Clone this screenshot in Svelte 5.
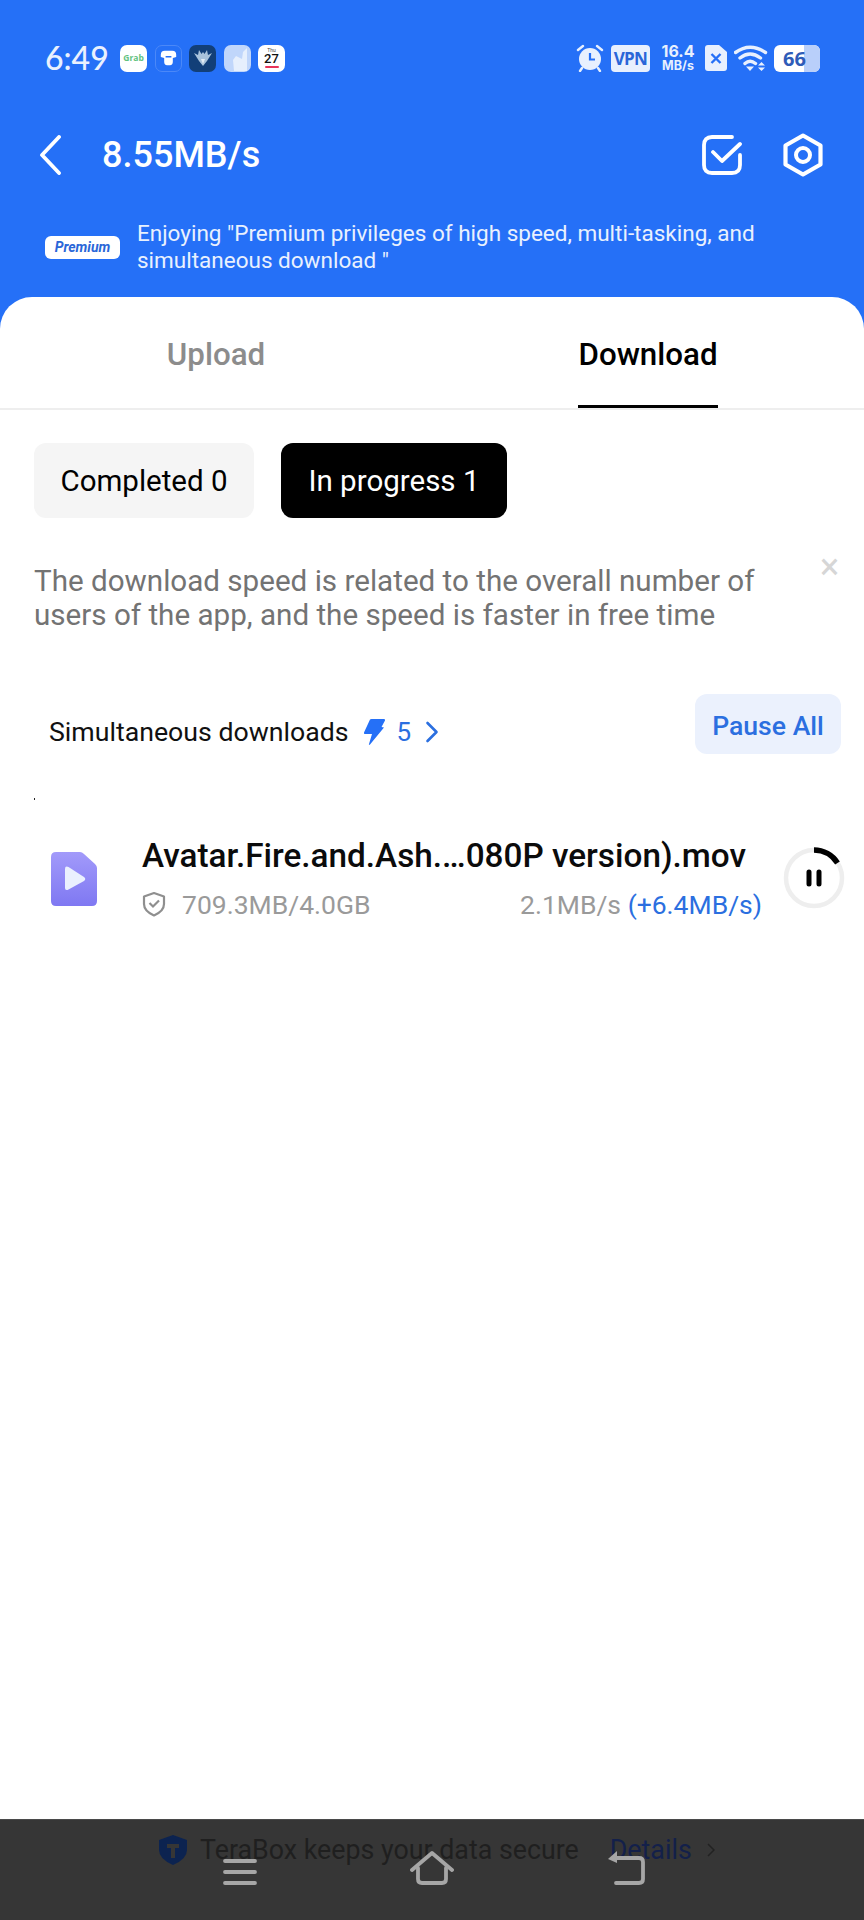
<script>
  const stats = { speed: '8.55MB/s', done: 0, active: 1, slots: 5 };
</script>

<div class="page">
  <header class="top">
    <div class="status">
      <span class="time">6:49</span>
      <div class="apps">
        <span class="tile white grab">Grab</span>
        <span class="tile outline">
          <svg viewBox="0 0 26 26" width="26" height="26"><path d="M5 9.500Q5 5.500 9 5.500H17Q21 5.500 21 9.500V12L17.500 13V17Q17.500 20.500 14.500 20.500H11.500Q8.500 20.500 8.500 17V13L5 12Z" fill="#fff"/><path d="M10 11H16V12.500H10Z" fill="#2570f7"/></svg>
        </span>
        <span class="tile navy">
          <svg viewBox="0 0 26 26" width="26" height="26"><path d="M13 21L9 16L4 8L8 10L9 5L11.500 9L13 7L14.500 9L17 5L18 10L22 8L17 16Z" fill="#a9c3dc"/><path d="M13 19L11 14H15Z" fill="#e4edf5"/></svg>
        </span>
        <span class="tile pale">
          <svg viewBox="0 0 26 26" width="26" height="26"><path d="M10 26L9 15L12 11L18 14L19 7L23 3V26Z" fill="#e6effd"/></svg>
        </span>
        <span class="tile white cal"><small>Thu</small><b>27</b><i></i></span>
      </div>
      <div class="sys">
        <svg class="alarm" viewBox="0 0 28 28" width="28" height="28"><circle cx="14" cy="15" r="11" fill="#e8f0fe"/><path d="M14 9V15.500H19" fill="none" stroke="#2570f7" stroke-width="2.200"/><path d="M2 6L7 2M26 6L21 2M6 24L4 27M22 24L24 27" stroke="#e8f0fe" stroke-width="2.400" stroke-linecap="round"/></svg>
        <span class="vpn">VPN</span>
        <span class="net"><b>16.4</b><b class="unit">MB/s</b></span>
        <svg class="sim" viewBox="0 0 22 26" width="22" height="26"><path d="M3 0H14L22 7V23Q22 26 19 26H3Q0 26 0 23V3Q0 0 3 0Z" fill="#e8f0fe"/><path d="M6.500 9L15.500 18M15.500 9L6.500 18" stroke="#2570f7" stroke-width="2.400"/></svg>
        <svg class="wifi" viewBox="0 0 34 28" width="34" height="28"><path d="M1.500 8.500Q16 -2 31.500 8.500M6 14Q16 6 26.500 14M11 19.500Q16 15 21.500 19.500" fill="none" stroke="#e8f0fe" stroke-width="3.400" stroke-linecap="round"/><path d="M12 22.500H20L16 27Z" fill="#e8f0fe"/><path d="M24 21.500L27.500 18L31 21.500ZM24 23.500H31L27.500 27Z" fill="#e8f0fe"/></svg>
        <span class="battery"><b>66</b><i></i></span>
      </div>
    </div>

    <div class="bar">
      <svg class="back" viewBox="0 0 24 40" width="24" height="40"><path d="M21 2L4 20L21 38" fill="none" stroke="#fff" stroke-width="3.800" stroke-linecap="round" stroke-linejoin="round"/></svg>
      <h1>{stats.speed}</h1>
      <svg class="check" viewBox="0 0 40 40" width="40" height="40"><path d="M38 20V30Q38 38 30 38H10Q2 38 2 30V10Q2 2 10 2H30" fill="none" stroke="#fff" stroke-width="3.800" stroke-linecap="round"/><path d="M11 17L20 26L38 9" fill="none" stroke="#fff" stroke-width="3.800" stroke-linecap="round" stroke-linejoin="round"/></svg>
      <svg class="gear" viewBox="0 0 42 44" width="42" height="44"><path d="M21 2.500L38.500 12.500V31.500L21 41.500L3.500 31.500V12.500Z" fill="none" stroke="#fff" stroke-width="4.200" stroke-linejoin="round"/><circle cx="21" cy="22" r="7" fill="none" stroke="#fff" stroke-width="4"/></svg>
    </div>

    <div class="promo">
      <span class="badge">Premium</span>
      <p>Enjoying "Premium privileges of high speed, multi-tasking, and simultaneous download "</p>
    </div>
  </header>

  <main class="sheet">
    <nav class="tabs">
      <button class="tab">Upload</button>
      <button class="tab on">Download</button>
    </nav>

    <div class="chips">
      <span class="chip">Completed {stats.done}</span>
      <span class="chip dark">In progress {stats.active}</span>
    </div>

    <div class="notice">
      <p>The download speed is related to the overall number of users of the app, and the speed is faster in free time</p>
      <span class="close">×</span>
    </div>

    <div class="sim-row">
      <span class="label">Simultaneous downloads</span>
      <svg class="bolt" viewBox="0 0 24 28" width="24" height="28"><path d="M8 1.500Q8.500 1 9.500 1H22Q23.500 1 23 2.500L19.500 9L22 9.500L8 26.500Q6.500 27.500 7 26L10 16H3Q1.500 16 2 14.500Z" fill="#2570f7"/></svg>
      <span class="num">{stats.slots}</span>
      <svg class="more" viewBox="0 0 14 22" width="14" height="22"><path d="M2.500 2L11.500 11L2.500 20" fill="none" stroke="#2b6fe0" stroke-width="2.600" stroke-linecap="round" stroke-linejoin="round"/></svg>
      <button class="pause-all">Pause All</button>
    </div>

    <div class="dot"></div>

    <div class="item">
      <svg class="file" viewBox="0 0 46 54" width="46" height="54">
        <defs><linearGradient id="fg" x1="0" y1="0" x2="0" y2="1"><stop offset="0" stop-color="#a29afa"/><stop offset="1" stop-color="#7f78f2"/></linearGradient></defs>
        <path d="M5 0H29Q31 0 33 2L44 12Q46 14 46 16V49Q46 54 41 54H5Q0 54 0 49V5Q0 0 5 0Z" fill="url(#fg)"/>
        <path d="M14 17Q14 13.500 17.500 15L33 25Q35.500 27 33 29L17.500 37.500Q14 39 14 36Z" fill="#eaf0fe"/>
      </svg>
      <div class="meta">
        <div class="name">Avatar.Fire.and.Ash.…080P version).mov</div>
        <div class="sub">
          <svg class="shield" viewBox="0 0 24 26" width="24" height="26"><path d="M12 2L22 5.500V13Q22 20 12 24.500Q2 20 2 13V5.500Z" fill="none" stroke="#8f8f8f" stroke-width="2.200" stroke-linejoin="round"/><path d="M7.500 12L11 15.500L17 9.500" fill="none" stroke="#8f8f8f" stroke-width="2.200"/></svg>
          <span class="size">709.3MB/4.0GB</span>
          <span class="rate">2.1MB/s <em>(+6.4MB/s)</em></span>
        </div>
      </div>
      <svg class="ring" viewBox="0 0 62 62" width="62" height="62">
        <circle cx="31" cy="31" r="28" fill="none" stroke="#eeeeee" stroke-width="4.500"/>
        <path d="M31 3A28 28 0 0 1 54.500 16" fill="none" stroke="#000" stroke-width="5.500"/>
        <path d="M26 25V37M36 25V37" stroke="#000" stroke-width="5" stroke-linecap="round"/>
      </svg>
    </div>
  </main>

  <footer class="foot">
    <div class="secure">
      <svg viewBox="0 0 28 30" width="28" height="30"><path d="M14 0L28 5V15Q28 24 14 30Q0 24 0 15V5Z" fill="#0c2350"/><path d="M8 9H20V13H16V23H12V13H8Z" fill="#363636"/></svg>
      <span class="sec-text">TeraBox keeps your data secure</span>
      <span class="details">Details</span>
      <svg viewBox="0 0 8 14" width="8" height="14"><path d="M1 1L7 7L1 13" fill="none" stroke="#222" stroke-width="1.500"/></svg>
    </div>
    <div class="navkeys">
      <svg viewBox="0 0 34 26" width="34" height="26"><path d="M2 2H32M2 13H32M2 24H32" stroke="#a6a6a6" stroke-width="3.800" stroke-linecap="round"/></svg>
      <svg viewBox="0 0 44 34" width="44" height="34"><path d="M2 19L22 2L42 19" fill="none" stroke="#a6a6a6" stroke-width="3.800" stroke-linecap="round" stroke-linejoin="round"/><path d="M8 17V28Q8 32 12 32H32Q36 32 36 28V17" fill="none" stroke="#a6a6a6" stroke-width="3.800" stroke-linecap="round"/></svg>
      <svg viewBox="0 0 38 34" width="38" height="34"><path d="M9 7H32Q36 7 36 11V28Q36 32 32 32H9" fill="none" stroke="#a6a6a6" stroke-width="3.800" stroke-linecap="round"/><path d="M10 0V12L1 8Z" fill="#a6a6a6"/></svg>
    </div>
  </footer>
</div>

<style>
  :global(body) { margin: 0; background: #fff; }
  .page {
    width: 864px; height: 1920px; display: flex; flex-direction: column;
    font-family: Roboto, "Noto Sans", sans-serif; background: #2570f7; overflow: hidden;
  }
  button { border: 0; background: none; font: inherit; padding: 0; }
  p { margin: 0; }

  .top { color: #fff; height: 297px; flex: none; box-sizing: border-box; padding-top: 44px; }
  .status { display: flex; align-items: center; height: 28px; padding: 0 44px 0 45px; }
  .time { font: 500 32px/28px Lato, sans-serif; color: #eaf1fe; width: 75px; }
  .apps { display: flex; gap: 7.500px; }
  .tile {
    width: 27px; height: 27px; border-radius: 7px; display: flex; align-items: center;
    justify-content: center; overflow: hidden; box-sizing: border-box;
  }
  .white { background: #fff; }
  .grab { color: #62c27f; font: 700 8.500px/1 "Open Sans", sans-serif; }
  .outline { border: 1px solid #4b88f8; }
  .navy { background: #123f78; }
  .pale { background: #c0d6fb; }
  .cal { flex-direction: column; color: #111; gap: 0; }
  .cal small { font-size: 5px; line-height: 5px; color: #444; }
  .cal b { font: 500 13px/12px Roboto, sans-serif; }
  .cal i { width: 14px; height: 2px; background: #e8355a; border-radius: 2px; margin-top: 1px; }
  .sys { margin-left: auto; display: flex; align-items: center; }
  .vpn {
    margin-left: 7px; width: 39px; height: 27px; border-radius: 4px; background: #e8f0fe; color: #2a66d8;
    font: 700 17px/27px "Open Sans", sans-serif; text-align: center; letter-spacing: -0.700px;
  }
  .net { margin-left: 10px; width: 36px; display: flex; flex-direction: column; align-items: center; color: #e8f0fe; }
  .net b { font: 700 16px/15px Inter, sans-serif; }
  .net .unit { font-size: 12.500px; line-height: 13px; }
  .sim { margin-left: 9px; }
  .wifi { margin-left: 7px; }
  .battery {
    margin-left: 6px; position: relative; width: 46px; height: 27px; border-radius: 6px; background: #fff;
    overflow: hidden; text-align: left;
  }
  .battery b { position: relative; z-index: 1; display: block; padding-left: 9px; font: 700 20px/27px "Open Sans", sans-serif; color: #2f5cb8; }
  .battery i { position: absolute; right: 0; top: 0; bottom: 0; width: 16px; background: #b9cffa; }

  .bar { display: flex; align-items: center; height: 44px; margin-top: 61px; padding: 0 40px 0 38px; }
  .back { flex: none; }
  h1 { margin: 0 0 0 40px; font: 500 36px/44px Roboto, sans-serif; flex: 1; }
  .check { margin-right: 40px; }
  .promo { display: flex; align-items: center; padding: 43px 40px 0 45px; }
  .badge {
    flex: none; width: 75px; height: 23px; background: #fff; border-radius: 6px; color: #2a66d8;
    font: italic 700 14px/23px Roboto, sans-serif; text-align: center;
  }
  .promo p { margin-left: 17px; font-size: 22.500px; line-height: 27px; color: #e9f1fe; }

  .sheet { flex: 1; background: #fff; border-radius: 32px 32px 0 0; }
  .tabs { display: flex; height: 111px; border-bottom: 2px solid #eeeeee; }
  .tab { flex: 1; font-size: 31.300px; font-weight: 500; color: #8c8c8c; position: relative; padding-top: 4px; }
  .tab.on { color: #000; }
  .tab.on::after {
    content: ""; position: absolute; left: 50%; bottom: 0; width: 140px; margin-left: -70px;
    height: 3px; background: #000;
  }
  .chips { display: flex; gap: 27px; padding: 33px 0 0 34px; }
  .chip {
    height: 75px; width: 220px; justify-content: center; display: flex; align-items: center; background: #f5f5f5; color: #000;
    border-radius: 12px; font-size: 29.500px; box-sizing: border-box;
  }
  .chip.dark { background: #000; color: #fff; width: 226px; }
  .notice { position: relative; padding: 46px 0 0 34px; }
  .notice p { width: 760px; font-size: 29.600px; line-height: 34px; color: #737373; }
  .close { position: absolute; left: 820px; top: 31px; font-size: 36px; line-height: 36px; color: #d6d6d6; }
  .sim-row { display: flex; align-items: center; height: 60px; padding: 62px 23px 0 49px; }
  .label { font-size: 26.700px; color: #111; margin-top: 15px; }
  .bolt { margin-left: 13px; margin-top: 15px; }
  .num { margin-left: 11px; font-size: 26px; color: #2b6fe0; margin-top: 15px; }
  .more { margin-left: 14px; margin-top: 15px; }
  .pause-all {
    margin-left: auto; width: 146px; height: 60px; border-radius: 12px; background: #ebf1fd; color: #2b6fe0;
    font-size: 26.600px; font-weight: 500; padding-top: 2px;
  }
  .dot { width: 1px; height: 2px; background: #222; margin: 44px 0 0 34px; }
  .item { display: flex; align-items: center; padding: 36px 0 0 51px; }
  .file { flex: none; }
  .meta { margin-left: 45px; width: 641px; }
  .name { font-size: 33.300px; font-weight: 500; line-height: 40px; color: #0b0b0b; white-space: nowrap; }
  .sub { display: flex; align-items: center; height: 34px; margin-top: 11px; font-size: 26.500px; color: #9a9a9a; }
  .shield { flex: none; margin-right: 16px; }
  .rate { margin-left: auto; margin-right: 21px; }
  em { font-style: normal; color: #2b6fe0; }
  .ring { flex: none; margin-top: -2px; }

  .foot { height: 101px; flex: none; background: #363636; position: relative; border-top: 1px solid #4a4a4a; box-sizing: border-box; }
  .secure { display: flex; align-items: center; position: absolute; left: 159px; top: 14px; height: 32px; }
  .sec-text { margin-left: 13px; font-size: 26.800px; color: #1f1f1f; }
  .details { margin-left: 31px; font-size: 26.800px; color: #13204a; }
  .secure svg:last-child { margin-left: 15px; }
  .navkeys { position: absolute; left: 223px; top: 31px; display: flex; align-items: flex-end; height: 34px; }
  .navkeys svg:nth-child(2) { margin-left: 153px; }
  .navkeys svg:nth-child(3) { margin-left: 153px; }
</style>
